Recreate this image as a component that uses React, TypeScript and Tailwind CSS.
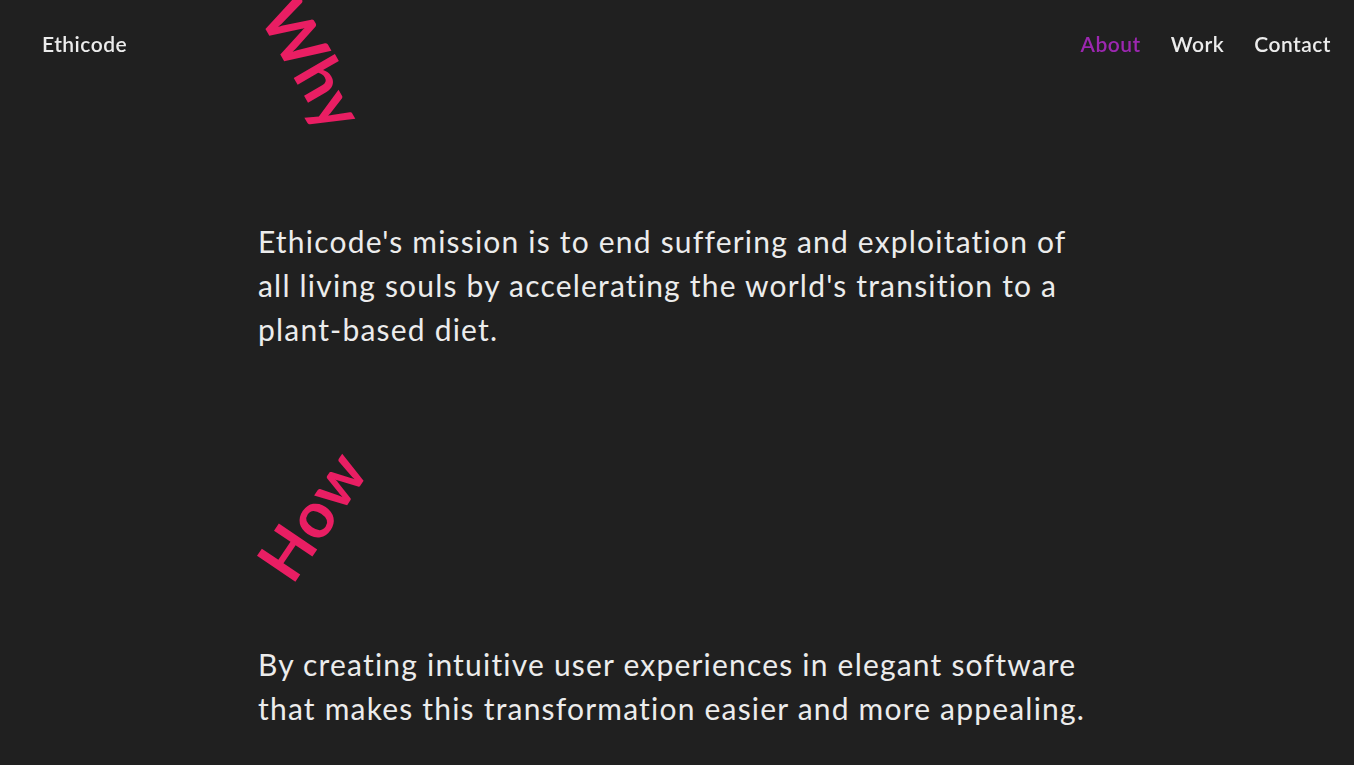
const navLinks = [
  { label: "About", active: true },
  { label: "Work", active: false },
  { label: "Contact", active: false },
];

function Header() {
  return (
    <header className="fixed top-0 left-0 right-0 z-10 flex items-center justify-between h-[88px] pl-[42px] pr-[23px]">
      <a className="text-[21px] tracking-[0.5px] font-semibold text-[#ececec]">Ethicode</a>
      <nav className="flex items-center gap-[30px]">
        {navLinks.map((link) => (
          <a
            key={link.label}
            className={`text-[21px] tracking-[0.5px] font-semibold ${
              link.active ? "text-[#9c27b0]" : "text-[#ececec]"
            }`}
          >
            {link.label}
          </a>
        ))}
      </nav>
    </header>
  );
}

function Heading({ text, tilt }: { text: string; tilt: "down" | "up" }) {
  return (
    <div className="relative h-[130px]">
      <span
        className={`absolute inline-block text-[64px] leading-[64px] font-bold tracking-[1px] text-[#e91e63] ${
          tilt === "down"
            ? "left-[-14px] top-[32px] rotate-[60deg]"
            : "left-[-16px] top-[36px] -rotate-[56deg]"
        }`}
      >
        {text}
      </span>
    </div>
  );
}

export default function App() {
  return (
    <div className="min-h-screen bg-[#202020] font-['Lato',sans-serif] text-[#ececec] overflow-hidden">
      <Header />
      <main className="pl-[258px] w-[1100px]">
        <Heading text="Why" tilt="down" />
        <p className="mt-[89px] text-[30px] leading-[44px] tracking-[1.2px]">
          Ethicode's mission is to end suffering and exploitation of all living
          souls by accelerating the world's transition to a plant-based diet.
        </p>
        <div className="mt-[96px]">
          <Heading text="How" tilt="up" />
        </div>
        <p className="mt-[65px] text-[30px] leading-[44px] tracking-[1.2px]">
          By creating intuitive user experiences in elegant software that makes
          this transformation easier and more appealing.
        </p>
      </main>
    </div>
  );
}
